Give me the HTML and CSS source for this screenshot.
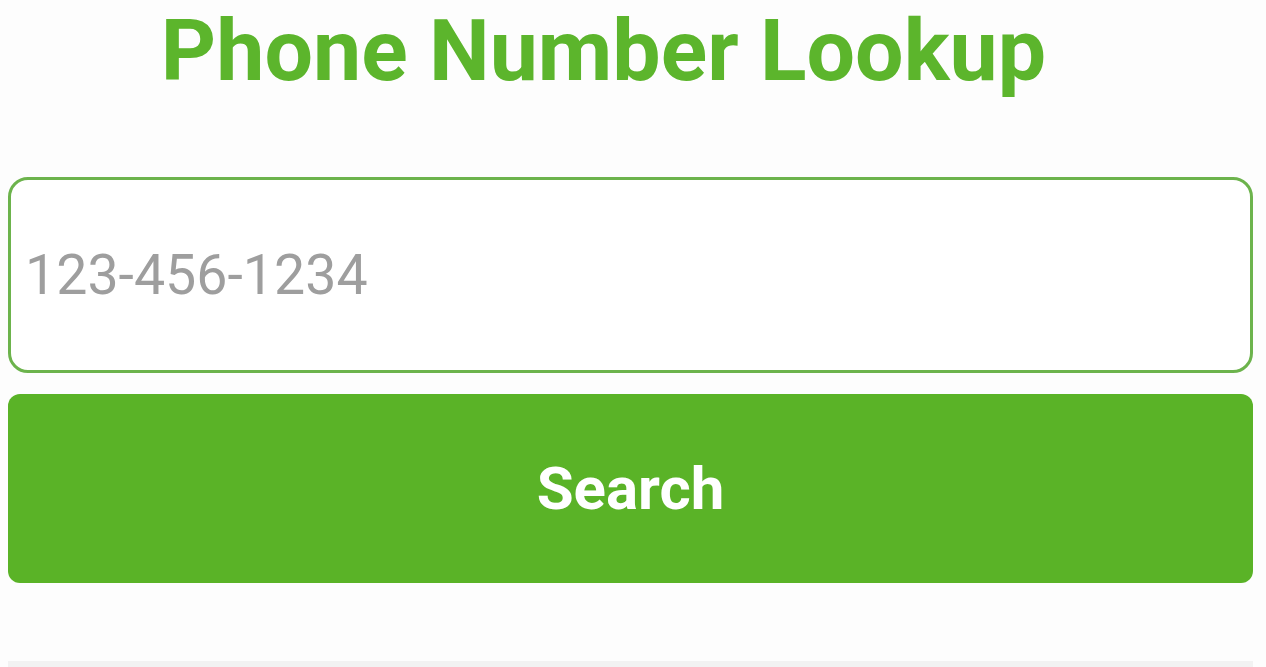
FILE: index.html
```html
<!DOCTYPE html>
<html>
<head>
  <title>Phone Number Lookup</title>
  <link rel="stylesheet" href="styles.css">
</head>
<body>
  <div class="page">
    <h1 class="title">Phone Number Lookup</h1>
    <form class="lookup" onsubmit="return false;">
      <input type="tel" name="phone" class="phone" placeholder="123-456-1234">
      <button type="submit" class="search">Search</button>
    </form>
    <div class="footer-bar"></div>
  </div>
</body>
</html>
```

FILE: styles.css
```css
body{
  margin: 0;
  background: #fdfdfd;
  font-family: Roboto, "Liberation Sans", sans-serif;
}
.page{
  padding: 0 13px 0 8px;
}
.title{
  margin: 0;
  padding: 0 54px 0 0;
  text-align: center;
  font-size: 86px;
  line-height: normal;
  font-weight: 700;
  color: #5cb52c;
}
.lookup{
  display: flex;
  flex-direction: column;
  gap: 21px;
  margin-top: 76px;
}
.phone{
  box-sizing: border-box;
  height: 196px;
  padding: 0 14px;
  background: #fff;
  border: 3px solid #6cb34c;
  border-radius: 20px;
  font-family: Roboto, "Liberation Sans", sans-serif;
  font-size: 55.5px;
  color: #333;
  outline: 0;
}
.phone::placeholder{
  color: #9e9e9e;
}
.search{
  height: 189px;
  background: #5ab327;
  border: none;
  border-radius: 12px;
  color: #fff;
  font-family: Roboto, "Liberation Sans", sans-serif;
  font-size: 60px;
  font-weight: 700;
  cursor: pointer;
}
.footer-bar{
  height: 10px;
  margin-top: 78px;
  background: #f2f2f2;
}
```
